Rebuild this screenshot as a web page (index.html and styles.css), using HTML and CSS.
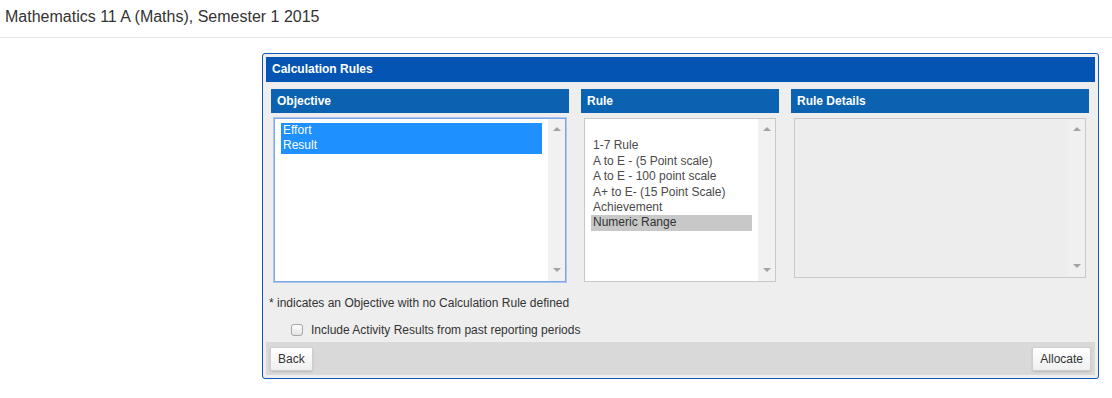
FILE: index.html
```html
<!DOCTYPE html>
<html>
<head>
<meta charset="utf-8">
<link rel="stylesheet" href="styles.css">
</head>
<body>
<div class="page-title">Mathematics 11 A (Maths), Semester 1 2015</div>
<div class="content">
  <div class="panel">
    <div class="panel-header">Calculation Rules</div>
    <div class="columns">
      <div class="col col-wide">
        <div class="col-header">Objective</div>
        <div class="listbox focused">
          <div class="list-items">
            <div class="item selected">Effort</div>
            <div class="item selected">Result</div>
          </div>
          <div class="scrollbar"><span class="arrow up"></span><span class="arrow down"></span></div>
        </div>
      </div>
      <div class="col col-narrow">
        <div class="col-header">Rule</div>
        <div class="listbox">
          <div class="list-items">
            <div class="item">&nbsp;</div>
            <div class="item">1-7 Rule</div>
            <div class="item">A to E - (5 Point scale)</div>
            <div class="item">A to E - 100 point scale</div>
            <div class="item">A+ to E- (15 Point Scale)</div>
            <div class="item">Achievement</div>
            <div class="item chosen">Numeric Range</div>
          </div>
          <div class="scrollbar"><span class="arrow up"></span><span class="arrow down"></span></div>
        </div>
      </div>
      <div class="col col-wide">
        <div class="col-header">Rule Details</div>
        <div class="listbox disabled">
          <div class="list-items"></div>
          <div class="scrollbar"><span class="arrow up"></span><span class="arrow down"></span></div>
        </div>
      </div>
    </div>
    <div class="note">* indicates an Objective with no Calculation Rule defined</div>
    <label class="check-row"><span class="checkbox"></span>Include Activity Results from past reporting periods</label>
    <div class="footer">
      <button class="btn">Back</button>
      <button class="btn">Allocate</button>
    </div>
  </div>
</div>
</body>
</html>
```
FILE: styles.css
```css
html, body {
  margin: 0;
  padding: 0;
  background: #ffffff;
  font-family: "Liberation Sans", Arial, sans-serif;
  color: #333333;
}

.page-title {
  font-size: 16px;
  line-height: 20px;
  padding: 7px 5px 10px;
  border-bottom: 1px solid #e5e5e5;
}

.content {
  padding: 15px 13px 0 262px;
}

.panel {
  width: 837px;
  box-sizing: border-box;
  border: 1px solid #1159b6;
  border-radius: 3px;
  padding: 3px;
  background: #eeeeee;
}

.panel-header {
  height: 25px;
  line-height: 25px;
  background: #0454b4;
  color: #ffffff;
  font-size: 12px;
  font-weight: bold;
  padding-left: 6px;
}

.columns {
  display: flex;
  gap: 12px;
  margin: 7px 5px 0;
}

.col-wide { width: 298px; }
.col-narrow { width: 198px; }

.col-header {
  height: 24px;
  line-height: 24px;
  background: #0a62b1;
  color: #ffffff;
  font-size: 12px;
  font-weight: bold;
  padding-left: 6px;
}

.listbox {
  margin: 5px 3px 0;
  height: 164px;
  box-sizing: border-box;
  border: 1px solid #c8c8c8;
  background: #ffffff;
  display: flex;
}

.listbox.focused {
  border-color: #7fa6e6;
  box-shadow: 0 0 0 1px #a9c4f0;
}

.listbox.disabled {
  height: 160px;
  background: #ededed;
}

.list-items {
  flex: 1;
  padding: 4px 6px;
  font-size: 12px;
  color: #4a4a4a;
}

.item {
  height: 15.4px;
  line-height: 15.4px;
  padding-left: 2px;
  white-space: nowrap;
}

.item.selected {
  background: #1e90ff;
  color: #ffffff;
}

.item.chosen {
  background: #c8c8c8;
  color: #333333;
}

.scrollbar {
  width: 17px;
  background: #f1f1f1;
  display: flex;
  flex-direction: column;
  justify-content: space-between;
  align-items: center;
  padding: 8px 0 9px;
}

.disabled .scrollbar {
  background: #f0f0f0;
}

.arrow {
  width: 0;
  height: 0;
  border-left: 4px solid transparent;
  border-right: 4px solid transparent;
}

.arrow.up { border-bottom: 4px solid #a3a3a3; }
.arrow.down { border-top: 4px solid #a3a3a3; }

.note {
  margin-top: 14px;
  padding-left: 3px;
  font-size: 12px;
  line-height: 15px;
}

.check-row {
  display: flex;
  align-items: center;
  margin: 11px 0 0 25px;
  height: 16px;
  font-size: 12px;
}

.checkbox {
  width: 12px;
  height: 12px;
  box-sizing: border-box;
  border: 1px solid #a6a6a6;
  border-radius: 3px;
  background: linear-gradient(#fdfdfd, #e3e3e3);
  margin-right: 8px;
}

.footer {
  margin-top: 4px;
  height: 33px;
  box-sizing: border-box;
  background: #d9d9d9;
  display: flex;
  justify-content: space-between;
  align-items: flex-start;
  padding: 5px 4px 4px;
}

.btn {
  height: 24px;
  padding: 0 7px;
  font-family: "Liberation Sans", Arial, sans-serif;
  font-size: 12px;
  color: #333333;
  background: linear-gradient(#ffffff, #f0f0f0);
  border: 1px solid #cfcfcf;
  border-radius: 2px;
  box-shadow: 0 1px 2px rgba(0, 0, 0, 0.15);
}
```
